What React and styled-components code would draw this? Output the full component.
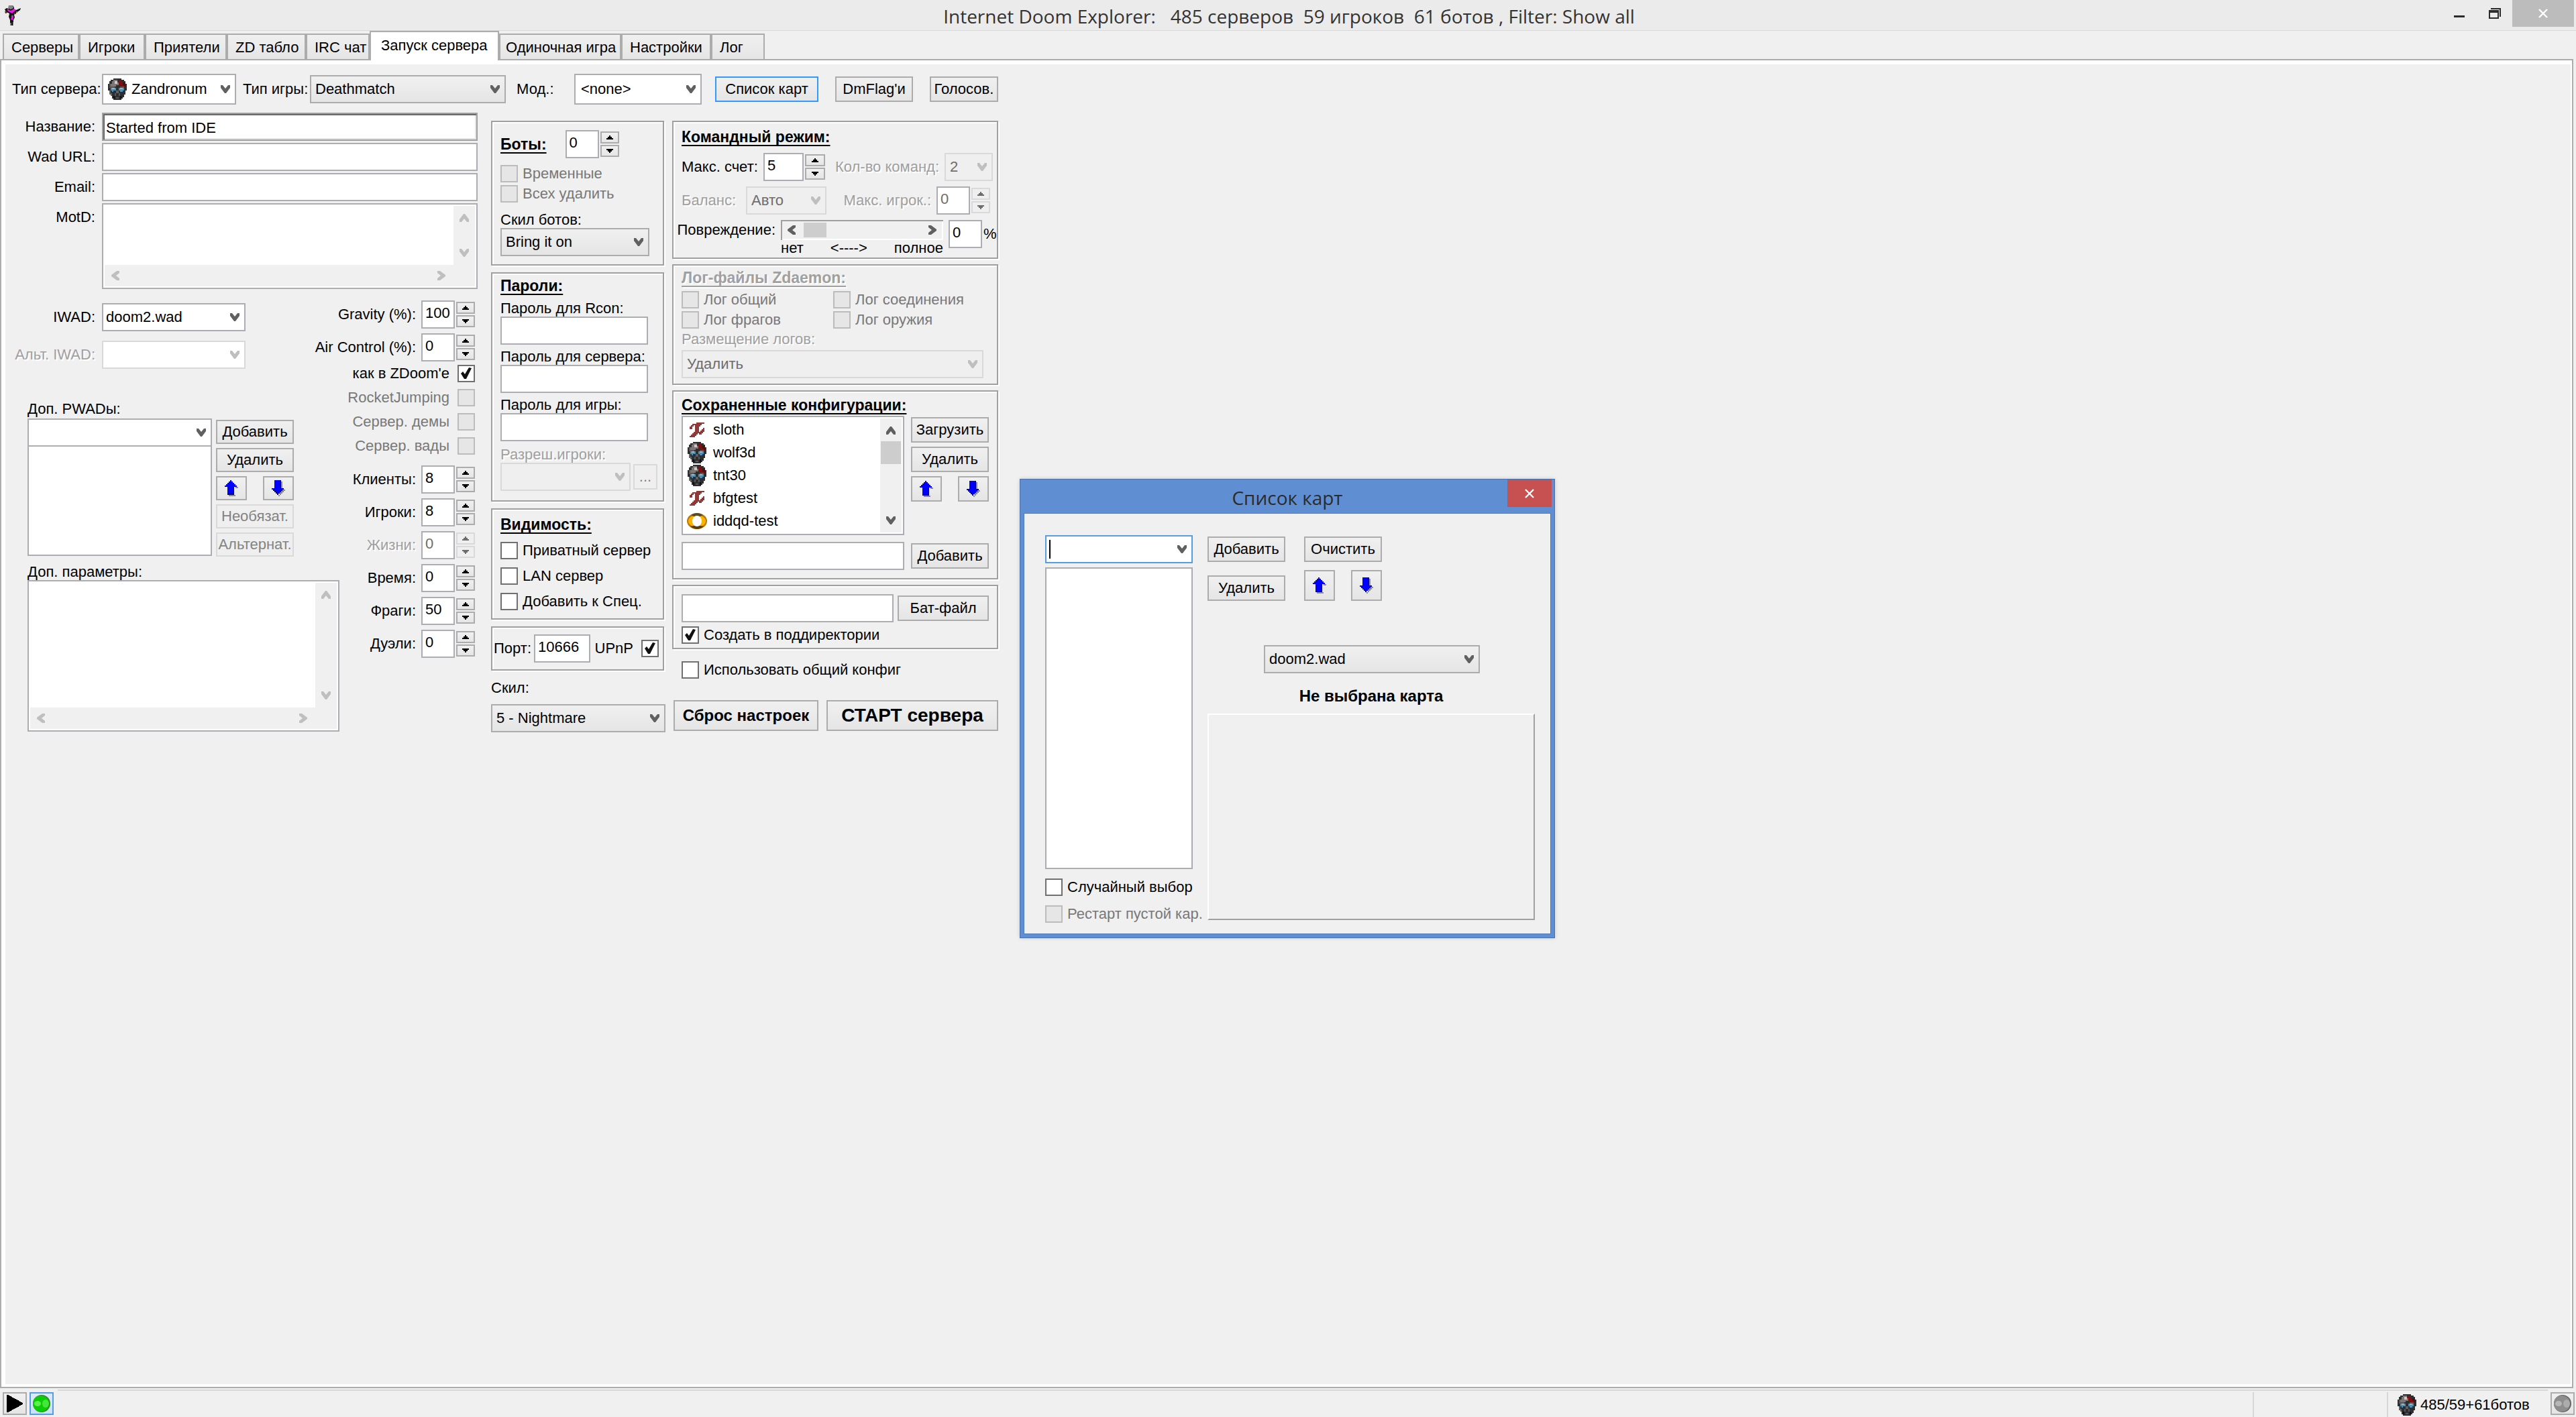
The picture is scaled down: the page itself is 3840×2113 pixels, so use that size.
import React from "react";
import styled, { createGlobalStyle, css } from "styled-components";

const UI_FONT = `"Liberation Sans", Arial, sans-serif`;
const TITLE_FONT = `"Open Sans", "Noto Sans", sans-serif`;

const GlobalStyle = createGlobalStyle`
  *, *::before, *::after { box-sizing: border-box; }
  body { margin: 0; background: #f0f0f0; }
  body, button, input, select, textarea {
    font-family: ${UI_FONT};
    font-size: 22px;
    line-height: 24px;
    color: #000;
  }
  button, input, select, textarea { margin: 0; border-radius: 0; outline: none; }
`;

/* ---------- shared pieces ---------- */

const face = css`
  border: 2px solid #acacac;
  background: linear-gradient(#f0f0f0, #e5e5e5);
`;

const Row = styled.div`
  display: flex;
  align-items: ${(p) => p.$align || "center"};
  justify-content: ${(p) => p.$justify || "flex-start"};
  gap: ${(p) => p.$gap || 0}px;
`;

const Column = styled.div`
  display: flex;
  flex-direction: column;
  align-items: ${(p) => p.$align || "stretch"};
  gap: ${(p) => p.$gap || 0}px;
`;

const Label = styled.label`
  flex: none;
  display: flex;
  justify-content: ${(p) => (p.$right ? "flex-end" : "flex-start")};
  width: ${(p) => (p.$width ? `${p.$width}px` : "auto")};
  padding-right: ${(p) => (p.$right ? p.$pad || 8 : 0)}px;
  line-height: ${(p) => p.$line || 24}px;
  white-space: nowrap;
  ${(p) => p.$off && css`
    color: #a0a0a0;
    text-shadow: 2px 2px #fff;
  `}
`;

const Button = styled.button`
  ${face}
  flex: none;
  display: flex;
  align-items: center;
  justify-content: center;
  width: ${(p) => p.$width}px;
  height: ${(p) => p.$height || 38}px;
  padding: 0;
  white-space: nowrap;
  ${(p) => p.$active && css`border-color: #3399ff;`}
  ${(p) => p.$bold && css`font-weight: bold; font-size: 24px;`}
  ${(p) => p.$large && css`font-size: 28px;`}
  &:disabled { border-color: #d9d9d9; background: #efefef; color: #838383; }
`;

const TextInput = styled.input`
  flex: ${(p) => (p.$width ? "none" : "1")};
  min-width: 0;
  width: ${(p) => (p.$width ? `${p.$width}px` : "100%")};
  height: 42px;
  padding: 0 4px 4px;
  border: 2px solid #abadb3;
  background: #fff;
  &:disabled { color: #6d6d6d; }
`;

const SunkenInput = styled(TextInput)`
  border-color: #a0a0a0;
  box-shadow: inset 2px 2px #696969, inset -2px -2px #e3e3e3;
  padding: 4px 4px 0;
`;

const SelectBox = styled.div`
  flex: none;
  display: grid;
  align-items: center;
  width: ${(p) => p.$width}px;
  height: ${(p) => p.$height || 42}px;
  > * { grid-area: 1 / 1; }
  > svg { justify-self: end; margin-right: 8px; pointer-events: none; }
`;

const NativeSelect = styled.select`
  ${face}
  appearance: none;
  width: 100%;
  height: 100%;
  padding: 0 30px 0 ${(p) => p.$inset || 6}px;
  ${(p) => p.$editable && css`
    border-color: #abadb3;
    background: #fff;
  `}
  &:disabled {
    opacity: 1;
    border-color: #d9d9d9;
    background: ${(p) => (p.$editable ? "#fff" : "#efefef")};
    color: #6d6d6d;
  }
`;

const CheckInput = styled.input`
  appearance: none;
  flex: none;
  width: 26px;
  height: 26px;
  border: 2px solid #707070;
  background: #fff;
  &:checked::before {
    content: "";
    display: block;
    width: 22px;
    height: 22px;
    background: #111;
    clip-path: polygon(3px 11px, 6px 8px, 9px 12px, 15px 2px, 19px 3px, 11px 19px, 8px 19px);
  }
  &:disabled { border-color: #bcbcbc; background: #e6e6e6; }
`;

const CheckLabel = styled.label`
  display: flex;
  align-items: center;
  gap: ${(p) => p.$gap || 7}px;
  height: 26px;
  white-space: nowrap;
  color: ${(p) => (p.$off ? "#787878" : "#000")};
`;

const Chevron = ({ off, turn = 0 }) => (
  <svg width="16" height="16" viewBox="0 0 16 16" aria-hidden="true">
    <path d="M1 2h3l4 5 4-5h3v4l-6 8H7L1 6z" fill={off ? "#bfbfbf" : "#606060"} transform={`rotate(${turn} 8 8)`} />
  </svg>
);

const Select = ({ id, value = "", width, height, editable, off, inset, label }) => (
  <SelectBox $width={width} $height={height}>
    <NativeSelect id={id} aria-label={label} $editable={editable} $inset={inset} disabled={off} defaultValue={value}>
      <option value={value}>{value}</option>
    </NativeSelect>
    <Chevron off={off} />
  </SelectBox>
);

const Check = ({ children, checked, off, before }) => (
  <CheckLabel $off={off} $gap={before ? 12 : 7}>
    {before && children}
    <CheckInput type="checkbox" defaultChecked={checked} disabled={off} />
    {!before && children}
  </CheckLabel>
);

const SpinColumn = styled.div`
  display: grid;
  gap: 2px;
  width: ${(p) => p.$width}px;
  margin-left: 2px;
`;

const SpinButton = styled.button`
  ${face}
  display: flex;
  align-items: center;
  justify-content: center;
  height: 18px;
  padding: 0;
  color: #000;
  &:disabled { border-color: #d9d9d9; background: #efefef; color: #6d6d6d; }
`;

const Spinner = ({ id, value, off, width = 50, spin = 28 }) => (
  <Row>
    <TextInput id={id} $width={width} defaultValue={value} disabled={off} />
    <SpinColumn $width={spin}>
      <SpinButton aria-label="+" disabled={off}>
        <svg width="10" height="6" viewBox="0 0 10 6"><path d="M4 0h2v2h2v2h2v2H0V4h2V2h2z" fill="currentColor" /></svg>
      </SpinButton>
      <SpinButton aria-label="−" disabled={off}>
        <svg width="10" height="6" viewBox="0 0 10 6"><path d="M0 0h10v2H8v2H6v2H4V4H2V2H0z" fill="currentColor" /></svg>
      </SpinButton>
    </SpinColumn>
  </Row>
);

/* Multi-line box with permanently visible, inactive scroll bars */
const MemoFrame = styled.div`
  display: grid;
  grid-template-columns: 1fr 32px;
  grid-template-rows: 1fr 32px;
  width: ${(p) => (p.$width ? `${p.$width}px` : "100%")};
  height: ${(p) => p.$height}px;
  padding: 2px;
  border: 2px solid #abadb3;
  background: #fff;
`;

const MemoText = styled.textarea`
  border: 0;
  padding: 2px 4px;
  resize: none;
  overflow: hidden;
  min-height: 0;
`;

const VBar = styled.div`
  display: flex;
  flex-direction: column;
  align-items: center;
  justify-content: space-between;
  padding: 10px 0;
  background: #f0f0f0;
`;

const HBar = styled.div`
  grid-column: 1 / -1;
  display: flex;
  align-items: center;
  justify-content: space-between;
  padding: 0 42px 0 8px;
  background: #f0f0f0;
`;

const Memo = ({ id, width, height }) => (
  <MemoFrame $width={width} $height={height}>
    <MemoText id={id} />
    <VBar><Chevron off turn={180} /><Chevron off /></VBar>
    <HBar><Chevron off turn={90} /><Chevron off turn={270} /></HBar>
  </MemoFrame>
);

const Group = styled.section`
  display: flex;
  flex-direction: column;
  margin-right: 2px;
  padding: ${(p) => p.$pad};
  border: 2px solid #a0a0a0;
  box-shadow: inset 2px 2px #fff, 2px 2px #fff;
`;

const GroupTitle = styled.h2`
  margin: 0;
  font-size: 23px;
  line-height: 24px;
  text-decoration: underline;
  text-decoration-thickness: 2px;
  text-underline-offset: 4px;
  text-decoration-skip-ink: none;
  white-space: nowrap;
  ${(p) => p.$off && css`
    color: #a0a0a0;
    text-shadow: 2px 2px #fff;
  `}
`;

const Stack = styled.div`
  display: flex;
  flex-direction: column;
  align-items: flex-start;
  gap: ${(p) => p.$gap || 0}px;
  padding-top: ${(p) => p.$top || 0}px;
`;

/* ---------- drawings ---------- */

const MaskIcon = () => (
  <svg width="28" height="32" viewBox="0 0 14 16" shapeRendering="crispEdges" aria-hidden="true">
    <path d="M4 0h6v1h2v1h1v2h1v5h-1v3h-1v2h-1v1h-1v1H4v-1H3v-2H2v-1H1V9H0V4h1V2h1V1h2z" fill="#2e2e30" />
    <path d="M4 1h3v1h1v3H6v1H2V4h1V2h1z" fill="#7c7878" />
    <path d="M1 4h1v3H1zM2 6h3v1H2zM9 6h3v1H9z" fill="#5a5658" />
    <path d="M5 2h2v2H5z" fill="#d8c4c4" />
    <path d="M8 1h2v2h1v2h1v1h-2V5H8V3H7V2h1z" fill="#7d1010" />
    <path d="M11 3h2v3h-1V5h-1z" fill="#4e0f0f" />
    <path d="M2 7h4v2H4v1H3V9H2zM8 7h4v2h-1v1H9V9H8z" fill="#4f8fb4" />
    <path d="M3 7h2v1H3zM9 7h2v1H9z" fill="#83bfdb" />
    <path d="M1 9h1v2h1v2H2v-1H1zM6 9h2v2H6z" fill="#606064" />
    <path d="M5 11h1v2H5zM8 11h1v2H8zM6 14h2v1H6z" fill="#55585c" />
    <path d="M4 13h1v2H4zM9 13h1v2H9z" fill="#101012" />
  </svg>
);

const RuneIcon = () => (
  <svg width="22" height="22" viewBox="0 0 11 11" shapeRendering="crispEdges" aria-hidden="true">
    <path
      d="M5 0h6v1H5zM2 1h7v1H2zM1 2h2v1H1zM4 2h4v1H4zM0 3h2v2H0zM4 3h3v4H4zM10 4h1v1h-1zM9 5h2v1H9zM8 6h3v1H8zM3 7h7v1H3zM2 8h4v1H2zM7 8h2v1H7zM1 9h4v1H1zM0 10h4v1H0z"
      fill="#8f3a38"
    />
  </svg>
);

const RingIcon = () => (
  <svg width="30" height="24" viewBox="0 0 30 24" aria-hidden="true">
    <ellipse cx="15" cy="12" rx="15" ry="12" fill="#b87a08" />
    <ellipse cx="15" cy="12" rx="13" ry="9" fill="#fbb200" />
    <path d="M6 3Q15-3 24 3L20 5H10z" fill="#5c4a20" />
    <path d="M5 20Q15 28 25 20L20 19H10z" fill="#5e3c04" />
    <ellipse cx="15" cy="12" rx="7" ry="8" fill="#fff" />
  </svg>
);

const MarineIcon = () => (
  <svg width="26" height="32" viewBox="0 0 26 32" aria-hidden="true">
    <path d="M7 1h6l2 3v3l3 1 7-3-1 3-7 5-2 2 1 4-2 4v8H9v-8l-2-5 1-5-5-2-2-4 3-2 3 1z" fill="#151515" />
    <path d="M7 1h6l1 4-4 2-4-2z" fill="#858585" />
    <path d="M5 6l5 3 5-3 3 2-5 4h-3L5 9z" fill="#ee10ee" />
    <path d="M11 16h3v3l-1 4-3-1 1-3z" fill="#f010f0" />
    <path d="M1 10h3v3H2zM15 12h3v2h-3z" fill="#8a2418" />
    <path d="M18 10h2v2h-2z" fill="#8d7a22" />
    <path d="M9 27h2v4H9zM13 26h1v5h-1z" fill="#777" />
  </svg>
);

const Arrow = ({ down }) => (
  <svg width="20" height="24" viewBox="0 0 10 12" shapeRendering="crispEdges" aria-hidden="true">
    {down ? (
      <>
        <path d="M3 1h5v6h2v1H9v1H8v1H7v1H6v1H5v-1h1z" fill="#8c8c8c" />
        <path d="M2 0h5v6h2v1H8v1H7v1H6v1H5v1H4v-1H3V9H2V8H1V7H0V6h2z" fill="#000080" />
        <path d="M2 0h4v6h2v1H7v1H6v1H5v1H4V9H3V8H2V7H0V6h2z" fill="#0000ff" />
      </>
    ) : (
      <>
        <path d="M8 5h2v1H8v6H3v-1h5z" fill="#8c8c8c" />
        <path d="M2 5h5v6H2z" fill="#000080" />
        <path d="M4 0h1v1h1v1h1v1h1v1h1v1H6v5H2V5H0V4h1V3h1V2h1V1h1z" fill="#0000ff" />
      </>
    )}
  </svg>
);

const Ball = ({ base, light, dark }) => (
  <svg width="26" height="26" viewBox="0 0 26 26" aria-hidden="true">
    <circle cx="13" cy="13" r="13" fill={dark} />
    <circle cx="12" cy="13" r="12" fill={base} />
    <ellipse cx="7" cy="13" rx="5" ry="4" fill={light} opacity=".7" />
    <ellipse cx="19" cy="13" rx="5" ry="6" fill={light} opacity=".5" />
  </svg>
);

const ArrowPair = ({ width, height, gap }) => (
  <Row $gap={gap}>
    <Button $width={width} $height={height} aria-label="Вверх"><Arrow /></Button>
    <Button $width={width} $height={height} aria-label="Вниз"><Arrow down /></Button>
  </Row>
);

/* ---------- window chrome ---------- */

const Window = styled.div`
  position: relative;
  display: flex;
  flex-direction: column;
  min-height: 100vh;
  background: #f0f0f0;
`;

const TitleBar = styled.header`
  display: grid;
  grid-template-columns: 1fr auto 1fr;
  align-items: start;
  height: 46px;
  padding: 0 3px 0 6px;
  background: #ebebeb;
  border-bottom: 1px solid #d9d9d9;
  > svg { margin-top: 7px; }
`;

const WindowTitle = styled.h1`
  margin: 0;
  font: 400 28px/48px ${TITLE_FONT};
  color: #333;
  white-space: pre;
`;

const CaptionButtons = styled.div`
  display: flex;
  justify-content: flex-end;
`;

const CaptionButton = styled.button`
  display: flex;
  align-items: center;
  justify-content: center;
  width: ${(p) => (p.$close ? 92 : 53)}px;
  height: 40px;
  padding: 0;
  border: 0;
  background: ${(p) => (p.$close ? "#bcbcbc" : "transparent")};
`;

const TabBar = styled.nav`
  display: flex;
  align-items: flex-end;
  height: 42px;
  padding-left: 4px;
`;

const Tab = styled.button`
  ${face}
  border-bottom: 0;
  width: ${(p) => p.$width}px;
  height: 38px;
  padding: 2px 0 0 ${(p) => p.$pad || 11}px;
  text-align: left;
  white-space: nowrap;
  ${(p) => p.$active && css`
    position: relative;
    height: 44px;
    margin-bottom: -2px;
    padding: 0 0 2px 15px;
    background: #fff;
  `}
`;

const PageFrame = styled.main`
  flex: 1;
  display: flex;
  margin-right: 4px;
  padding: 6px 2px 4px 6px;
  border: 2px solid #acacac;
  background: #fff;
`;

const Page = styled.div`
  flex: 1;
  padding: 14px 10px;
  background: #f0f0f0;
`;

const Toolbar = styled.div`
  display: flex;
  align-items: center;
  height: 46px;
  gap: 10px;
  margin-bottom: 12px;
`;

const ToolbarButtons = styled.div`
  display: flex;
  gap: 25px;
  margin-left: 10px;
`;

const IconSelect = styled.div`
  display: grid;
  align-items: center;
  > * { grid-area: 1 / 1; }
  > svg { margin-left: 9px; pointer-events: none; }
`;

const Panels = styled.div`
  display: grid;
  grid-template-columns: 694px 260px 488px;
  align-items: start;
`;

/* ---------- left column ---------- */

const FieldGrid = styled.div`
  display: grid;
  grid-template-columns: 134px 560px;
  row-gap: 3px;
  align-items: start;
`;

const LowerGrid = styled.div`
  display: grid;
  grid-template-columns: 460px 28px 202px;
  align-items: start;
  padding-top: 17px;
`;

const WadArea = styled.div`
  grid-area: 1 / 1;
  padding-top: 4px;
`;

const PwadArea = styled.div`
  padding: 46px 0 0 23px;
`;

const ParamArea = styled.div`
  grid-area: 2 / 1 / 3 / 3;
  padding: 11px 0 0 23px;
`;

const NumbersArea = styled.div`
  grid-area: 1 / 2 / 3 / 4;
  display: flex;
  flex-direction: column;
  align-items: flex-end;
`;

const NumberRows = styled.div`
  display: flex;
  flex-direction: column;
  align-items: flex-end;
  gap: 7px;
`;

const CheckRows = styled.div`
  display: flex;
  flex-direction: column;
  align-items: flex-end;
  gap: 10px;
  padding: 5px 0 16px;
`;

const ListBox = styled.div`
  height: ${(p) => p.$height}px;
  border: 2px solid #abadb3;
  background: #fff;
`;

const PwadList = styled.div`
  width: 275px;
  > ${ListBox} { border-top: 0; }
`;

const ButtonStack = styled.div`
  display: flex;
  flex-direction: column;
  gap: ${(p) => p.$gap}px;
  padding-top: 2px;
`;

const NumberField = ({ id, label, value, off }) => (
  <Row>
    <Label htmlFor={id} $right $off={off}>{label}</Label>
    <Spinner id={id} value={value} off={off} />
  </Row>
);

const LeftPanel = () => (
  <div>
    <FieldGrid>
      <Label htmlFor="name" $right $pad={10} $line={42}>Название:</Label>
      <SunkenInput id="name" defaultValue="Started from IDE" />
      <Label htmlFor="url" $right $pad={10} $line={42}>Wad URL:</Label>
      <TextInput id="url" />
      <Label htmlFor="email" $right $pad={10} $line={42}>Email:</Label>
      <TextInput id="email" />
      <Label htmlFor="motd" $right $pad={10} $line={42}>MotD:</Label>
      <Memo id="motd" height={128} />
    </FieldGrid>
    <LowerGrid>
      <WadArea>
        <Column $gap={14}>
          <Row><Label htmlFor="iwad" $width={134} $right $pad={10}>IWAD:</Label><Select id="iwad" value="doom2.wad" width={214} editable inset={4} /></Row>
          <Row><Label htmlFor="altiwad" $width={134} $right $pad={10} $off>Альт. IWAD:</Label><Select id="altiwad" width={214} editable off /></Row>
        </Column>
        <PwadArea>
          <Label htmlFor="pwads" $line={28}>Доп. PWADы:</Label>
          <Row $gap={6} $align="flex-start">
            <PwadList>
              <Select id="pwads" width={275} editable />
              <ListBox $height={163} />
            </PwadList>
            <ButtonStack $gap={6}>
              <Button $width={116} $height={36}>Добавить</Button>
              <Button $width={116} $height={36}>Удалить</Button>
              <ArrowPair width={46} height={36} gap={24} />
              <Button $width={116} $height={36} disabled>Необязат.</Button>
              <Button $width={116} $height={36} disabled>Альтернат.</Button>
            </ButtonStack>
          </Row>
        </PwadArea>
      </WadArea>
      <ParamArea>
        <Label htmlFor="params">Доп. параметры:</Label>
        <Memo id="params" width={465} height={226} />
      </ParamArea>
      <NumbersArea>
        <NumberRows>
          <NumberField id="gravity" label="Gravity (%):" value="100" />
          <NumberField id="air" label="Air Control (%):" value="0" />
        </NumberRows>
        <CheckRows>
          <Check before checked>как в ZDoom'е</Check>
          <Check before off>RocketJumping</Check>
          <Check before off>Сервер. демы</Check>
          <Check before off>Сервер. вады</Check>
        </CheckRows>
        <NumberRows>
          <NumberField id="clients" label="Клиенты:" value="8" />
          <NumberField id="players" label="Игроки:" value="8" />
          <NumberField id="lives" label="Жизни:" value="0" off />
          <NumberField id="time" label="Время:" value="0" />
          <NumberField id="frags" label="Фраги:" value="50" />
          <NumberField id="duels" label="Дуэли:" value="0" />
        </NumberRows>
      </NumbersArea>
    </LowerGrid>
  </div>
);

/* ---------- middle column ---------- */

const MiddleColumn = styled.div`
  display: flex;
  flex-direction: column;
  gap: 10px;
  padding: 12px 0 0 20px;
  width: 280px;
`;

const SkillBlock = styled.div`
  display: grid;
  gap: 12px;
  padding-top: 4px;
`;

const MiddlePanel = () => (
  <MiddleColumn>
    <Group $pad="12px">
      <Row $gap={28}>
        <GroupTitle><label htmlFor="bots">Боты:</label></GroupTitle>
        <Spinner id="bots" value="0" />
      </Row>
      <Stack $gap={4} $top={10}>
        <Check off>Временные</Check>
        <Check off>Всех удалить</Check>
      </Stack>
      <Stack $top={14}>
        <Label htmlFor="botskill">Скил ботов:</Label>
        <Select id="botskill" value="Bring it on" width={222} />
      </Stack>
    </Group>
    <Group $pad="6px 10px 14px 12px">
      <GroupTitle>Пароли:</GroupTitle>
      <Stack $gap={6} $top={10}>
        <div><Label htmlFor="rcon">Пароль для Rcon:</Label><TextInput id="rcon" $width={220} /></div>
        <div><Label htmlFor="srvpass">Пароль для сервера:</Label><TextInput id="srvpass" $width={220} /></div>
        <div><Label htmlFor="gamepass">Пароль для игры:</Label><TextInput id="gamepass" $width={220} /></div>
      </Stack>
      <Stack $top={8}>
        <Label htmlFor="allowed" $off>Разреш.игроки:</Label>
        <Row $gap={4}>
          <Select id="allowed" width={194} off />
          <Button $width={36} disabled>...</Button>
        </Row>
      </Stack>
    </Group>
    <Group $pad="10px 12px 12px">
      <GroupTitle>Видимость:</GroupTitle>
      <Stack $gap={12} $top={14}>
        <Check>Приватный сервер</Check>
        <Check>LAN сервер</Check>
        <Check>Добавить к Спец.</Check>
      </Stack>
    </Group>
    <Group $pad="10px 6px 10px 2px">
      <Row $justify="space-between">
        <Row $gap={4}>
          <Label htmlFor="port">Порт:</Label>
          <TextInput id="port" $width={84} defaultValue="10666" />
        </Row>
        <Check before checked>UPnP</Check>
      </Row>
    </Group>
    <SkillBlock>
      <Label htmlFor="skill">Скил:</Label>
      <Select id="skill" value="5 - Nightmare" width={260} />
    </SkillBlock>
  </MiddleColumn>
);

/* ---------- right column ---------- */

const RightColumn = styled.div`
  display: flex;
  flex-direction: column;
  gap: 8px;
  padding: 12px 0 0 30px;
  width: 518px;
`;

const TeamRows = styled.div`
  display: flex;
  flex-direction: column;
  gap: 8px;
  padding-top: 12px;
`;

const SlideBar = styled.div`
  display: flex;
  align-items: center;
  width: 242px;
  height: 30px;
  padding: 2px 8px;
  background: #f0f0f0;
  box-shadow: inset 2px 2px #a0a0a0, inset -2px -2px #fff;
`;

const SlideThumb = styled.div`
  width: 34px;
  height: 22px;
  margin: 0 auto 0 10px;
  background: #cdcdcd;
`;

const DamageInput = styled(TextInput)`
  margin: 0 2px 0 8px;
`;

const CheckGrid = styled.div`
  display: grid;
  grid-template-columns: 226px 1fr;
  gap: 4px 0;
  padding-top: 8px;
`;

const ConfigGrid = styled.div`
  display: grid;
  grid-template-columns: 332px 116px;
  column-gap: 10px;
  row-gap: 10px;
  padding-top: 4px;
`;

const ConfigList = styled.div`
  display: grid;
  grid-template-columns: 1fr 32px;
  padding: 2px;
  border: 2px solid #abadb3;
  background: #fff;
`;

const ConfigItems = styled.ul`
  margin: 0;
  padding: 0;
  list-style: none;
`;

const ConfigItem = styled.li`
  display: grid;
  grid-template-columns: 38px 1fr;
  column-gap: 5px;
  align-items: center;
  height: 34px;
  > svg { justify-self: center; }
`;

const ScrollTrack = styled.div`
  display: flex;
  flex-direction: column;
  align-items: center;
  padding: 10px 0;
  background: #f0f0f0;
`;

const ScrollThumb = styled.div`
  width: 30px;
  height: 34px;
  margin: 8px 0 auto;
  background: #cdcdcd;
`;

const SharedRow = styled.div`
  display: flex;
  align-items: center;
  padding: 10px 0 0 14px;
`;

const LaunchRow = styled.div`
  display: flex;
  justify-content: space-between;
  padding: 24px 2px 0 2px;
`;

const configs = [
  ["sloth", RuneIcon],
  ["wolf3d", MaskIcon],
  ["tnt30", MaskIcon],
  ["bfgtest", RuneIcon],
  ["iddqd-test", RingIcon],
];

const RightPanel = () => (
  <RightColumn>
    <Group $pad="10px 6px 2px 12px">
      <GroupTitle>Командный режим:</GroupTitle>
      <TeamRows>
        <Row>
          <Label htmlFor="score" $width={122}>Макс. счет:</Label>
          <Spinner id="score" value="5" width={60} spin={30} />
          <Label htmlFor="teams" $width={178} $right $off>Кол-во команд:</Label>
          <Select id="teams" value="2" width={72} off />
        </Row>
        <Row>
          <Label htmlFor="balance" $width={96} $off>Баланс:</Label>
          <Select id="balance" value="Авто" width={120} off />
          <Label htmlFor="maxplayers" $width={164} $right $off>Макс. игрок.:</Label>
          <Spinner id="maxplayers" value="0" off />
        </Row>
        <Row $align="flex-start">
          <Label htmlFor="damage" $width={148} $right $line={30}>Повреждение:</Label>
          <div>
            <SlideBar><Chevron turn={90} /><SlideThumb /><Chevron turn={270} /></SlideBar>
            <Row $justify="space-between"><span>нет</span><span>&lt;----&gt;</span><span>полное</span></Row>
          </div>
          <DamageInput id="damage" $width={50} defaultValue="0" />
          <Label as="span" $line={42}>%</Label>
        </Row>
      </TeamRows>
    </Group>
    <Group $pad="6px 8px 8px 12px">
      <GroupTitle $off>Лог-файлы Zdaemon:</GroupTitle>
      <CheckGrid>
        <Check off>Лог общий</Check>
        <Check off>Лог соединения</Check>
        <Check off>Лог фрагов</Check>
        <Check off>Лог оружия</Check>
      </CheckGrid>
      <Stack $gap={4} $top={4}>
        <Label htmlFor="logs" $off>Размещение логов:</Label>
        <Select id="logs" value="Удалить" width={450} off />
      </Stack>
    </Group>
    <Group $pad="8px 12px 12px">
      <GroupTitle>Сохраненные конфигурации:</GroupTitle>
      <ConfigGrid>
        <ConfigList>
          <ConfigItems>
            {configs.map(([name, Icon]) => (
              <ConfigItem key={name}><Icon />{name}</ConfigItem>
            ))}
          </ConfigItems>
          <ScrollTrack><Chevron turn={180} /><ScrollThumb /><Chevron /></ScrollTrack>
        </ConfigList>
        <ButtonStack $gap={6}>
          <Button $width={116}>Загрузить</Button>
          <Button $width={116}>Удалить</Button>
          <ArrowPair width={46} height={38} gap={24} />
        </ButtonStack>
        <TextInput aria-label="Имя конфигурации" />
        <ButtonStack><Button $width={116}>Добавить</Button></ButtonStack>
      </ConfigGrid>
    </Group>
    <Group $pad="12px 12px 6px">
      <Row $gap={6}>
        <TextInput aria-label="Имя файла" />
        <Button $width={136}>Бат-файл</Button>
      </Row>
      <Stack $top={6}><Check checked>Создать в поддиректории</Check></Stack>
    </Group>
    <SharedRow><Check>Использовать общий конфиг</Check></SharedRow>
    <LaunchRow>
      <Button $width={216} $height={46} $bold>Сброс настроек</Button>
      <Button $width={256} $height={46} $bold $large>СТАРТ сервера</Button>
    </LaunchRow>
  </RightColumn>
);

/* ---------- map list window ---------- */

const Dialog = styled.section`
  position: absolute;
  left: 1520px;
  top: 714px;
  width: 798px;
  border: 1px solid #4a72b0;
  background: #5f8fd2;
  box-shadow: 0 0 6px rgba(0, 0, 0, 0.15);
`;

const DialogTitle = styled.div`
  display: grid;
  grid-template-columns: 66px 1fr 66px;
  align-items: start;
  height: 50px;
  padding: 0 4px;
`;

const DialogCaption = styled.h2`
  grid-column: 2;
  margin: 0;
  font: 400 28px/54px ${TITLE_FONT};
  color: #2b2b2b;
  text-align: center;
`;

const DialogClose = styled.button`
  display: flex;
  align-items: center;
  justify-content: center;
  height: 41px;
  padding: 0;
  border: 0;
  background: #c75050;
`;

const DialogBody = styled.div`
  display: grid;
  grid-template-columns: 220px 488px;
  column-gap: 22px;
  margin: 0 5px 5px;
  padding: 32px 0 16px 31px;
  border: 1px solid #4f7cba;
  background: #f0f0f0;
`;

const FocusedCombo = styled.div`
  display: grid;
  align-items: center;
  height: 42px;
  margin-bottom: 6px;
  > * { grid-area: 1 / 1; }
  > svg { justify-self: end; margin-right: 8px; }
  > input { border-color: #569de5; }
`;

const Caret = styled.span`
  width: 2px;
  height: 28px;
  margin-left: 6px;
  background: #000;
`;

const MapButtons = styled.div`
  display: grid;
  grid-template-columns: 116px 116px;
  column-gap: 28px;
  row-gap: 12px;
  align-items: end;
  padding-top: 2px;
`;

const MapSelectRow = styled.div`
  padding: 66px 0 22px 84px;
`;

const MapName = styled.p`
  margin: 0 0 14px;
  font-weight: bold;
  font-size: 24px;
  text-align: center;
`;

const MapPreview = styled.div`
  height: 308px;
  border: 2px solid;
  border-color: #fff #a0a0a0 #a0a0a0 #fff;
`;

const Cross = ({ size }) => (
  <svg width={size} height={size} viewBox="0 0 14 14" aria-hidden="true">
    <path d="M1 1l12 12M13 1L1 13" stroke="#fff" strokeWidth="2.4" />
  </svg>
);

const MapDialog = () => (
  <Dialog role="dialog" aria-label="Список карт">
    <DialogTitle>
      <DialogCaption>Список карт</DialogCaption>
      <DialogClose aria-label="Закрыть"><Cross size={14} /></DialogClose>
    </DialogTitle>
    <DialogBody>
      <div>
        <FocusedCombo>
          <TextInput aria-label="Карта" />
          <Caret />
          <Chevron />
        </FocusedCombo>
        <ListBox $height={450} />
        <Stack $gap={14} $top={14}>
          <Check>Случайный выбор</Check>
          <Check off>Рестарт пустой кар.</Check>
        </Stack>
      </div>
      <div>
        <MapButtons>
          <Button $width={116}>Добавить</Button>
          <Button $width={116}>Очистить</Button>
          <Button $width={116}>Удалить</Button>
          <ArrowPair width={46} height={46} gap={24} />
        </MapButtons>
        <MapSelectRow><Select label="WAD" value="doom2.wad" width={322} /></MapSelectRow>
        <MapName>Не выбрана карта</MapName>
        <MapPreview />
      </div>
    </DialogBody>
  </Dialog>
);

/* ---------- status bar ---------- */

const StatusBar = styled.footer`
  display: flex;
  align-items: flex-start;
  gap: 4px;
  height: 43px;
  padding: 2px 2px 0 4px;
`;

const StatusButton = styled.button`
  ${face}
  flex: none;
  display: flex;
  align-items: center;
  justify-content: center;
  width: 36px;
  height: 34px;
  margin-top: 4px;
  padding: 0;
  ${(p) => p.$on && css`
    border-color: #569de5;
    background: linear-gradient(#dcebfb, #c8e0fa);
  `}
`;

const StatusCells = styled.div`
  flex: 1;
  display: flex;
  justify-content: flex-end;
  height: 41px;
  margin-left: 2px;
  border-top: 2px solid #d7d7d7;
`;

const StatusCell = styled.div`
  display: flex;
  align-items: center;
  gap: 6px;
  width: ${(p) => p.$width}px;
  margin-top: 2px;
  padding-left: 14px;
  border-left: 2px solid #d7d7d7;
  font-size: 22px;
  white-space: nowrap;
`;

const tabs = [
  ["Серверы", 114], ["Игроки", 98], ["Приятели", 122], ["ZD табло", 118], ["IRC чат", 95],
  ["Запуск сервера", 193], ["Одиночная игра", 182, 8], ["Настройки", 134], ["Лог", 80],
];

export default function App() {
  return (
    <Window>
      <GlobalStyle />
      <TitleBar>
        <MarineIcon />
        <WindowTitle>{"Internet Doom Explorer:   485 серверов  59 игроков  61 ботов , Filter: Show all"}</WindowTitle>
        <CaptionButtons>
          <CaptionButton aria-label="Свернуть">
            <svg width="16" height="16" viewBox="0 0 16 16"><path d="M0 11h16v3H0z" fill="#2b2b2b" /></svg>
          </CaptionButton>
          <CaptionButton aria-label="Восстановить">
            <svg width="18" height="16" viewBox="0 0 18 16">
              <path d="M3 0h15v13h-2V2H3zM0 3h15v13H0zM2 7v7h11V7z" fillRule="evenodd" fill="#2b2b2b" />
            </svg>
          </CaptionButton>
          <CaptionButton $close aria-label="Закрыть"><Cross size={14} /></CaptionButton>
        </CaptionButtons>
      </TitleBar>
      <TabBar>
        {tabs.map(([name, width, pad]) => (
          <Tab key={name} $width={width} $pad={pad} $active={name === "Запуск сервера"}>{name}</Tab>
        ))}
      </TabBar>
      <PageFrame>
        <Page>
          <Toolbar>
            <Row>
              <Label htmlFor="engine" $width={134}>Тип сервера:</Label>
              <IconSelect>
                <Select id="engine" value="Zandronum" width={200} height={46} editable inset={42} />
                <MaskIcon />
              </IconSelect>
            </Row>
            <Row>
              <Label htmlFor="mode" $width={100}>Тип игры:</Label>
              <Select id="mode" value="Deathmatch" width={292} />
            </Row>
            <Row>
              <Label htmlFor="mod" $width={92}>&nbsp;Мод.:</Label>
              <Select id="mod" value="<none>" width={190} height={46} editable inset={8} />
            </Row>
            <ToolbarButtons>
              <Button $width={154} $active>Список карт</Button>
              <Button $width={116}>DmFlag'и</Button>
              <Button $width={102}>Голосов.</Button>
            </ToolbarButtons>
          </Toolbar>
          <Panels>
            <LeftPanel />
            <MiddlePanel />
            <RightPanel />
          </Panels>
        </Page>
      </PageFrame>
      <StatusBar>
        <StatusButton aria-label="Старт">
          <svg width="24" height="26" viewBox="0 0 12 13" shapeRendering="crispEdges"><path d="M0 0h1l11 6v1L1 13H0z" fill="#000" /></svg>
        </StatusButton>
        <StatusButton $on aria-label="Соединение"><Ball base="#0ccc08" light="#7dff6a" dark="#2f8a20" /></StatusButton>
        <StatusCells>
          <StatusCell $width={200} />
          <StatusCell $width={240}><MaskIcon />485/59+61ботов</StatusCell>
        </StatusCells>
        <StatusButton aria-label="Состояние"><Ball base="#8e8e8e" light="#c9c9c9" dark="#666" /></StatusButton>
      </StatusBar>
      <MapDialog />
    </Window>
  );
}
